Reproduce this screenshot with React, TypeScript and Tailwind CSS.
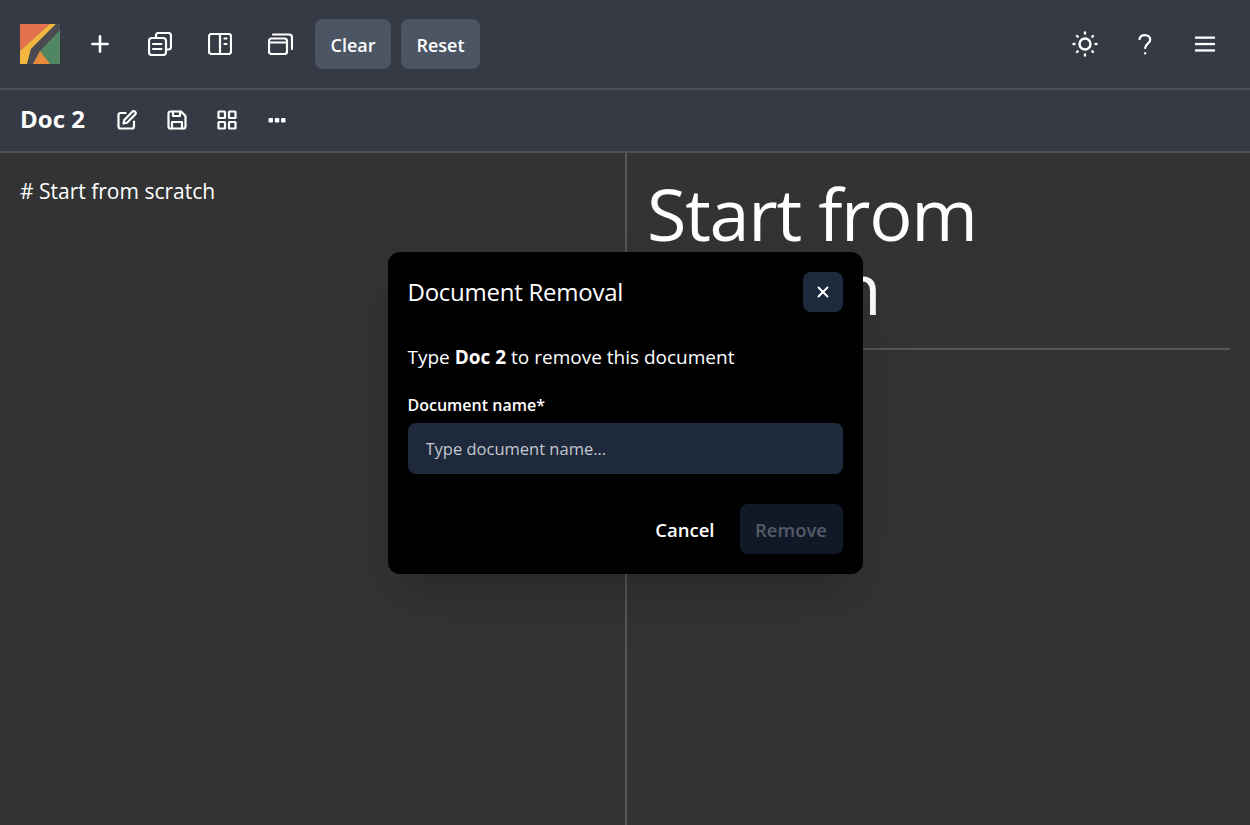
import { Plus, X } from "lucide-react";

function Logo() {
  return (
    <svg width="40" height="40" viewBox="0 0 40 40" className="shrink-0">
      <rect width="40" height="40" fill="#4f8763" />
      <polygon points="0,0 30,0 0,27" fill="#e4704c" />
      <polygon points="30,0 36,0 11,25 7,40 0,40 0,27" fill="#f4b63f" />
      <polygon points="36,0 39,0 40,1 40,6 20,27 13,40 7,40 11,25" fill="#4a4a50" />
      <polygon points="20,27 30,40 13,40" fill="#e88a3c" />
    </svg>
  );
}

function CopyDoc() {
  return (
    <svg width="24" height="24" viewBox="0 0 24 24" fill="none" stroke="currentColor" strokeWidth="2.200" strokeLinecap="round" strokeLinejoin="round">
      <rect x="1" y="6" width="17" height="17" rx="3" />
      <path d="M8 6V3.500a2.500 2.500 0 0 1 2.500-2.500h10a2.500 2.500 0 0 1 2.500 2.500V15a2.500 2.500 0 0 1-2.500 2.500H18" />
      <path d="M5 12h8.500M5 17h8.500" />
    </svg>
  );
}

function SplitPane() {
  return (
    <svg width="24" height="22" viewBox="0 0 24 22" fill="none" stroke="currentColor" strokeWidth="2.200" strokeLinecap="round" strokeLinejoin="round">
      <rect x="1" y="1" width="22" height="20" rx="2.500" />
      <path d="M12 1v20M16.500 5.500h2M16.500 11h2" />
    </svg>
  );
}

function Windows() {
  return (
    <svg width="25" height="22" viewBox="0 0 25 22" fill="none" stroke="currentColor" strokeWidth="2.200" strokeLinecap="round" strokeLinejoin="round">
      <rect x="1" y="5.500" width="18" height="15.500" rx="2.500" />
      <path d="M1 9.500h18M5 1.500h16a3 3 0 0 1 3 3V16" />
    </svg>
  );
}

function Sun() {
  return (
    <svg width="26" height="26" viewBox="0 0 26 26" fill="none" stroke="currentColor" strokeWidth="2.400" strokeLinecap="round">
      <circle cx="13" cy="13" r="5.500" />
      <path d="M13 1.500v1M13 23.500v1M1.500 13h1M23.500 13h1M5 5l.7.7M20.300 20.300l.7.7M5 21l.7-.7M20.300 5.700l.7-.7" />
    </svg>
  );
}

function Question() {
  return (
    <svg width="14" height="21" viewBox="0 0 14 21" fill="none" stroke="currentColor" strokeWidth="2.300" strokeLinecap="round" strokeLinejoin="round">
      <path d="M1.500 5C2 2.800 4 1.200 6.800 1.200c3.200 0 5.400 1.900 5.400 4.500 0 3.800-5 4-5 8.300" />
      <path d="M7.200 19.200v.3" />
    </svg>
  );
}

function Bars() {
  return (
    <svg width="20" height="16" viewBox="0 0 20 16" fill="currentColor">
      <rect x="0" y="0.500" width="20" height="2.300" />
      <rect x="0" y="6.900" width="20" height="2.300" />
      <rect x="0" y="13.300" width="20" height="2.300" />
    </svg>
  );
}

function Pen() {
  return (
    <svg width="20" height="20" viewBox="0 0 20 20" fill="none" stroke="currentColor" strokeWidth="2.200" strokeLinecap="round" strokeLinejoin="round">
      <path d="M8.500 3H3.500A2 2 0 0 0 1.500 5v11.500a2 2 0 0 0 2 2H15a2 2 0 0 0 2-2V11.500" />
      <path d="M15.300 1.800a1.900 1.900 0 0 1 2.800 2.700L10 12.700l-3.500.8.800-3.500z" />
    </svg>
  );
}

function Floppy() {
  return (
    <svg width="20" height="20" viewBox="0 0 20 20" fill="none" stroke="currentColor" strokeWidth="2.200" strokeLinecap="round" strokeLinejoin="round">
      <path d="M3.500 1.500H14l4.500 4.500v10.500a2 2 0 0 1-2 2h-13a2 2 0 0 1-2-2v-13a2 2 0 0 1 2-2z" />
      <path d="M5 18.500V12h10v6.500M6 1.500V6h7V1.500" />
    </svg>
  );
}

function Grid() {
  return (
    <svg width="20" height="20" viewBox="0 0 20 20" fill="none" stroke="currentColor" strokeWidth="2.200" strokeLinejoin="round">
      <rect x="1.500" y="1.500" width="6.500" height="6.500" rx="0.500" />
      <rect x="12" y="1.500" width="6.500" height="6.500" rx="0.500" />
      <rect x="1.500" y="12" width="6.500" height="6.500" rx="0.500" />
      <rect x="12" y="12" width="6.500" height="6.500" rx="0.500" />
    </svg>
  );
}

function Dots() {
  return (
    <svg width="18" height="6" viewBox="0 0 18 6" fill="currentColor">
      <rect x="0.500" y="1" width="4.500" height="4.500" rx="1" />
      <rect x="6.800" y="1" width="4.500" height="4.500" rx="1" />
      <rect x="13" y="1" width="4.500" height="4.500" rx="1" />
    </svg>
  );
}

export default function App() {
  return (
    <div className="relative flex h-[825px] flex-col overflow-hidden bg-[#333333] font-['Open_Sans','Noto_Sans',sans-serif] text-white">
      <header className="flex h-[90px] items-center justify-between border-b-2 border-[#4d4f55] bg-[#363a45] pl-5 pr-[25px]">
        <div className="flex items-center">
          <Logo />
          <div className="ml-5 flex h-10 w-10 items-center justify-center"><Plus size={26} strokeWidth={2.400} /></div>
          <div className="ml-5 flex h-10 w-10 items-center justify-center"><CopyDoc /></div>
          <div className="ml-5 flex h-10 w-10 items-center justify-center"><SplitPane /></div>
          <div className="ml-5 flex h-10 w-10 items-center justify-center"><Windows /></div>
          <button className="ml-[15px] h-[50px] w-[76px] rounded-lg bg-[#4b5563] pt-[2px] text-[18px] font-semibold">Clear</button>
          <button className="ml-[10px] h-[50px] w-[79px] rounded-lg bg-[#4b5563] pt-[2px] text-[18px] font-semibold">Reset</button>
        </div>
        <div className="flex items-center gap-5">
          <div className="flex h-10 w-10 items-center justify-center"><Sun /></div>
          <div className="flex h-10 w-10 items-center justify-center"><Question /></div>
          <div className="flex h-10 w-10 items-center justify-center"><Bars /></div>
        </div>
      </header>
      <div className="flex h-[63px] items-center border-b-2 border-[#4d4f55] bg-[#363a45] pb-[2px] pl-5">
        <h2 className="-mt-[2px] w-[87px] text-[24px] font-bold">Doc 2</h2>
        <div className="flex items-center gap-[10px]">
          <div className="flex h-10 w-10 items-center justify-center"><Pen /></div>
          <div className="flex h-10 w-10 items-center justify-center"><Floppy /></div>
          <div className="flex h-10 w-10 items-center justify-center"><Grid /></div>
          <div className="flex h-10 w-10 items-center justify-center"><Dots /></div>
        </div>
      </div>
      <main className="flex flex-1">
        <div className="w-[627px] border-r-2 border-[#55565a] p-5 text-[21px] leading-[38px]">
          <p className="-mt-[1px]"># Start from scratch</p>
        </div>
        <div className="flex-1 p-5">
          <h1 className="mt-[3px] border-b-2 border-[#55565a] pb-[24px] text-[72px] leading-[74px] tracking-[-1.300px]">Start from<br />scratch</h1>
        </div>
      </main>
      <div className="absolute inset-0 flex items-center justify-center">
        <div className="w-[475px] rounded-xl bg-black p-5 shadow-2xl">
          <div className="flex items-start justify-between">
            <h3 className="mt-[3px] text-[24px] leading-[34px] tracking-[-0.250px]">Document Removal</h3>
            <button className="flex h-10 w-10 items-center justify-center rounded-lg bg-[#1e293b]"><X size={18} strokeWidth={2.500} /></button>
          </div>
          <p className="mt-[30px] text-[19px] leading-[30px]">Type <strong>Doc 2</strong> to remove this document</p>
          <label className="mt-[21px] block text-[16px] font-semibold leading-[24px]">Document name*</label>
          <input placeholder="Type document name..." className="mt-[6px] h-[51px] w-full rounded-lg bg-[#1e293b] px-[18px] pt-[1px] text-[16.500px] outline-none placeholder:text-[#c4c8d0]" />
          <div className="mt-[30px] flex items-center justify-end">
            <button className="h-[50px] px-[25px] pt-[2px] text-[18.500px] font-semibold">Cancel</button>
            <button className="h-[50px] w-[103px] rounded-lg bg-[#111827] pt-[2px] text-[18.500px] font-semibold text-[#545b68]">Remove</button>
          </div>
        </div>
      </div>
    </div>
  );
}
